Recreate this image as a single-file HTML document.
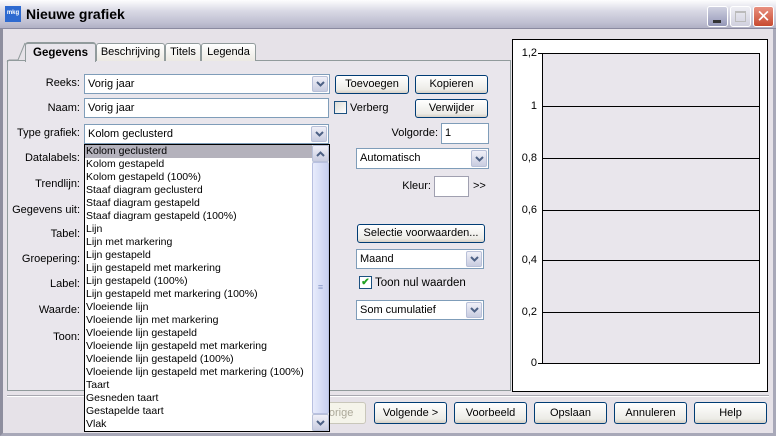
<!DOCTYPE html>
<html><head><meta charset="utf-8"><style>
*{box-sizing:border-box;margin:0;padding:0}
body{width:776px;height:436px;overflow:hidden;background:#e6e2e8;font-family:"Liberation Sans",sans-serif;font-size:11px;color:#000;position:relative}
.a{position:absolute}
.tb{left:0;top:0;width:776px;height:29px;background:linear-gradient(#fdfdfe,#d8d8e4 40%,#c0c0d2 80%,#b0b0c4);border-bottom:1px solid #8a8aa0}
.win{left:0;top:29px;width:776px;height:407px;border:3px solid #a8a8b8;border-top:none;border-left-color:#8e8e9e}
.lbl{text-align:right;width:80px;left:0}
.in{background:#fff;border:1px solid #7f9db9;padding:0 3px;white-space:nowrap;overflow:hidden}
.dd{position:absolute;right:1px;top:1px;bottom:1px;width:16px;background:linear-gradient(#f0f0f8,#c8cce0);border:1px solid #b8c0d8;border-radius:2px}
.dd svg{position:absolute;left:3px;top:50%;margin-top:-3px}
.btn{background:linear-gradient(#fff,#ecebe6 80%,#d6d0c5);border:1px solid #003c74;border-radius:3px;text-align:center;line-height:17px}
.tab{top:43px;height:18px;border:1px solid #919b9c;border-bottom:none;background:linear-gradient(#fff,#ece9e3);text-align:center;line-height:16px;border-radius:3px 3px 0 0}
.li{left:86px;height:13px;line-height:13px;width:226px;white-space:nowrap;font-size:10.5px}
.gl{left:542px;width:218px;height:1px;background:#000}
.yl{left:512px;width:25px;text-align:right}
</style></head><body>
<div class="a tb"></div>
<div class="a" style="left:5px;top:6px;width:16px;height:16px;background:#2e6ad0;color:#fff;font-size:6px;line-height:14px;text-align:center;font-weight:bold">mkg</div>
<div class="a" style="left:26px;top:6px;font-size:14px;font-weight:bold">Nieuwe grafiek</div>
<div class="a" style="left:707px;top:6px;width:21px;height:21px;border:1px solid #fff;border-radius:3px;background:linear-gradient(#cfd0e0,#9598b8)"><div class="a" style="left:5px;top:13px;width:8px;height:3px;background:#333"></div></div>
<div class="a" style="left:730px;top:6px;width:21px;height:21px;border:1px solid #fff;border-radius:3px;background:linear-gradient(#eeeef4,#d0d0de)"><div class="a" style="left:4px;top:4px;width:11px;height:11px;border:1px solid #bbb;border-top-width:2px"></div></div>
<div class="a" style="left:753px;top:6px;width:21px;height:21px;border:1px solid #fff;border-radius:3px;background:linear-gradient(#e89080,#c84a30);color:#fff;font-size:17px;line-height:19px;text-align:center">✕</div>
<div class="a win"></div>

<!-- tab panel -->
<div class="a" style="left:7px;top:60px;width:504px;height:331px;border:1px solid #919b9c;background:#e9e6ec"></div>
<div class="a tab" style="left:96px;width:69px">Beschrijving</div>
<div class="a tab" style="left:165px;width:36px">Titels</div>
<div class="a tab" style="left:201px;width:55px">Legenda</div>
<div class="a tab" style="left:25px;top:42px;height:20px;width:71px;background:#e9e6ec;border-top:2px solid #919b9c;font-weight:bold;font-size:11.5px;line-height:18px;border-bottom:none">Gegevens</div>
<svg class="a" style="left:6px;top:41px" width="22" height="22"><path d="M1 21 L3 19 L12 19 L19 2" stroke="#919b9c" fill="none"/></svg>

<!-- labels -->
<div class="a lbl" style="top:77px">Reeks:</div>
<div class="a lbl" style="top:102px">Naam:</div>
<div class="a lbl" style="top:127px">Type grafiek:</div>
<div class="a lbl" style="top:152px">Datalabels:</div>
<div class="a lbl" style="top:178px">Trendlijn:</div>
<div class="a lbl" style="top:204px">Gegevens uit:</div>
<div class="a lbl" style="top:228px">Tabel:</div>
<div class="a lbl" style="top:253px">Groepering:</div>
<div class="a lbl" style="top:278px">Label:</div>
<div class="a lbl" style="top:304px">Waarde:</div>
<div class="a lbl" style="top:331px">Toon:</div>

<div class="a in" style="left:84px;top:74px;width:246px;height:20px;line-height:18px">Vorig jaar<div class="dd"><svg width="9" height="6"><path d="M1 1L4.5 4.5L8 1" stroke="#4d6185" stroke-width="2" fill="none"/></svg></div></div>
<div class="a in" style="left:84px;top:98px;width:245px;height:20px;line-height:18px">Vorig jaar</div>
<div class="a in" style="left:84px;top:124px;width:245px;height:20px;line-height:18px">Kolom geclusterd<div class="dd"><svg width="9" height="6"><path d="M1 1L4.5 4.5L8 1" stroke="#4d6185" stroke-width="2" fill="none"/></svg></div></div>

<!-- right controls -->
<div class="a btn" style="left:335px;top:75px;width:74px;height:19px">Toevoegen</div>
<div class="a btn" style="left:415px;top:75px;width:73px;height:19px">Kopieren</div>
<div class="a" style="left:334px;top:101px;width:13px;height:13px;border:1px solid #1c5180;background:linear-gradient(135deg,#dcdcd6,#fff)"></div>
<div class="a" style="left:350px;top:102px">Verberg</div>
<div class="a btn" style="left:415px;top:99px;width:73px;height:19px">Verwijder</div>
<div class="a" style="left:380px;top:127px;width:58px;text-align:right">Volgorde:</div>
<div class="a in" style="left:441px;top:123px;width:48px;height:21px;line-height:19px">1</div>
<div class="a in" style="left:356px;top:148px;width:133px;height:21px;line-height:19px">Automatisch<div class="dd"><svg width="9" height="6"><path d="M1 1L4.5 4.5L8 1" stroke="#4d6185" stroke-width="2" fill="none"/></svg></div></div>
<div class="a" style="left:380px;top:180px;width:51px;text-align:right">Kleur:</div>
<div class="a" style="left:434px;top:176px;width:35px;height:21px;background:#fff;border:1px solid #a0a0b0"></div>
<div class="a" style="left:473px;top:180px">&gt;&gt;</div>
<div class="a btn" style="left:357px;top:224px;width:128px;height:19px">Selectie voorwaarden...</div>
<div class="a in" style="left:356px;top:249px;width:128px;height:20px;line-height:18px">Maand<div class="dd"><svg width="9" height="6"><path d="M1 1L4.5 4.5L8 1" stroke="#4d6185" stroke-width="2" fill="none"/></svg></div></div>
<div class="a" style="left:359px;top:276px;width:13px;height:13px;border:1px solid #1c5180;background:#fff;color:#21a121;font-size:10px;line-height:11px;text-align:center;font-weight:bold">✔</div>
<div class="a" style="left:375px;top:277px;font-size:11.5px">Toon nul waarden</div>
<div class="a in" style="left:356px;top:300px;width:128px;height:20px;line-height:18px">Som cumulatief<div class="dd"><svg width="9" height="6"><path d="M1 1L4.5 4.5L8 1" stroke="#4d6185" stroke-width="2" fill="none"/></svg></div></div>

<!-- chart -->
<div class="a" style="left:512px;top:39px;width:256px;height:353px;background:#fff;border:1px solid #000"></div>
<div class="a" style="left:542px;top:53px;width:218px;height:311px;background:#e9e6ec;border:1px solid #000"></div>
<div class="a gl" style="top:106px"></div>
<div class="a gl" style="top:158px"></div>
<div class="a gl" style="top:210px"></div>
<div class="a gl" style="top:260px"></div>
<div class="a gl" style="top:312px"></div>
<div class="a yl" style="top:47px">1,2</div>
<div class="a yl" style="top:100px">1</div>
<div class="a yl" style="top:152px">0,8</div>
<div class="a yl" style="top:204px">0,6</div>
<div class="a yl" style="top:254px">0,4</div>
<div class="a yl" style="top:306px">0,2</div>
<div class="a yl" style="top:357px">0</div>
<div class="a" style="left:538px;top:53px;width:4px;height:1px;background:#000"></div>
<div class="a" style="left:538px;top:363px;width:4px;height:1px;background:#000"></div>

<!-- bottom -->
<div class="a" style="left:7px;top:395px;width:762px;height:2px;border-top:1px solid #a8a8b0;border-bottom:1px solid #fff"></div>
<div class="a" style="left:300px;top:402px;width:66px;height:22px;border:1px solid #c9c7ba;border-radius:3px;background:#f5f4ea;color:#aca899;text-align:center;line-height:20px">&lt; Vorige</div>
<div class="a btn" style="left:374px;top:402px;width:73px;height:22px;line-height:20px">Volgende &gt;</div>
<div class="a btn" style="left:454px;top:402px;width:73px;height:22px;line-height:20px">Voorbeeld</div>
<div class="a btn" style="left:534px;top:402px;width:73px;height:22px;line-height:20px">Opslaan</div>
<div class="a btn" style="left:614px;top:402px;width:73px;height:22px;line-height:20px">Annuleren</div>
<div class="a btn" style="left:694px;top:402px;width:73px;height:22px;line-height:20px">Help</div>

<!-- dropdown list (on top) -->
<div class="a" style="left:84px;top:144px;width:246px;height:288px;background:#fff;border:1px solid #000"></div>
<div class="a" style="left:85px;top:145px;width:227px;height:13px;background:#b4b2bc"></div>
<div class="a li" style="top:145px">Kolom geclusterd</div>
<div class="a li" style="top:158px">Kolom gestapeld</div>
<div class="a li" style="top:171px">Kolom gestapeld (100%)</div>
<div class="a li" style="top:184px">Staaf diagram geclusterd</div>
<div class="a li" style="top:197px">Staaf diagram gestapeld</div>
<div class="a li" style="top:210px">Staaf diagram gestapeld (100%)</div>
<div class="a li" style="top:223px">Lijn</div>
<div class="a li" style="top:236px">Lijn met markering</div>
<div class="a li" style="top:249px">Lijn gestapeld</div>
<div class="a li" style="top:262px">Lijn gestapeld met markering</div>
<div class="a li" style="top:275px">Lijn gestapeld (100%)</div>
<div class="a li" style="top:288px">Lijn gestapeld met markering (100%)</div>
<div class="a li" style="top:301px">Vloeiende lijn</div>
<div class="a li" style="top:314px">Vloeiende lijn met markering</div>
<div class="a li" style="top:327px">Vloeiende lijn gestapeld</div>
<div class="a li" style="top:340px">Vloeiende lijn gestapeld met markering</div>
<div class="a li" style="top:353px">Vloeiende lijn gestapeld (100%)</div>
<div class="a li" style="top:366px">Vloeiende lijn gestapeld met markering (100%)</div>
<div class="a li" style="top:379px">Taart</div>
<div class="a li" style="top:392px">Gesneden taart</div>
<div class="a li" style="top:405px">Gestapelde taart</div>
<div class="a li" style="top:418px">Vlak</div>
<div class="a" style="left:312px;top:145px;width:17px;height:286px;background:#f4f4f0"></div>
<div class="a dd" style="left:312px;top:145px;width:17px;height:17px;right:auto;bottom:auto"><svg width="9" height="6"><path d="M1 5L4.5 1.5L8 5" stroke="#4d6185" stroke-width="2" fill="none"/></svg></div>
<div class="a" style="left:312px;top:162px;width:17px;height:252px;background:linear-gradient(90deg,#e8ecfc,#c8d0f0);border:1px solid #b8c0e0;border-radius:2px;text-align:center;line-height:248px;color:#8898c8;font-size:9px">≡</div>
<div class="a dd" style="left:312px;top:414px;width:17px;height:17px;right:auto;bottom:auto"><svg width="9" height="6"><path d="M1 1L4.5 4.5L8 1" stroke="#4d6185" stroke-width="2" fill="none"/></svg></div>
</body></html>
